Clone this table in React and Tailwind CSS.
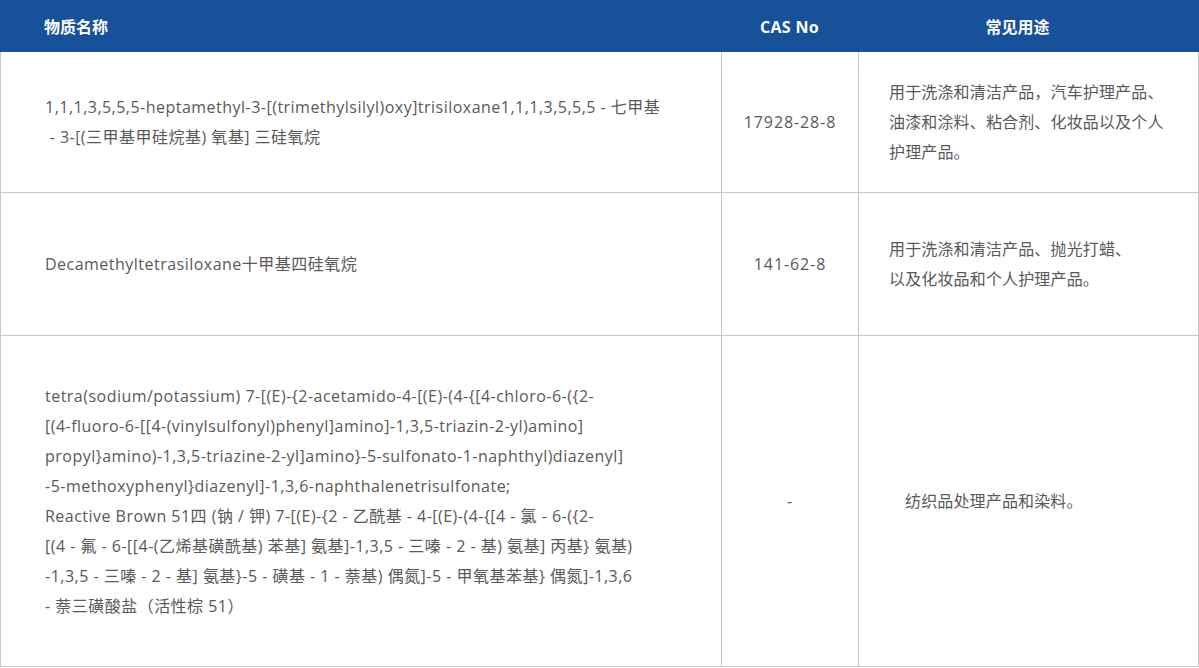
const font = { fontFamily: '"Open Sans", "Noto Sans CJK SC", sans-serif' };

const rows = [
  {
    name: [
      "1,1,1,3,5,5,5-heptamethyl-3-[(trimethylsilyl)oxy]trisiloxane1,1,1,3,5,5,5 - 七甲基",
      " - 3-[(三甲基甲硅烷基) 氧基] 三硅氧烷",
    ],
    cas: "17928-28-8",
    use: ["用于洗涤和清洁产品，汽车护理产品、", "油漆和涂料、粘合剂、化妆品以及个人", "护理产品。"],
    h: "h-[141px]",
    usePad: "pl-[30px]",
  },
  {
    name: ["Decamethyltetrasiloxane十甲基四硅氧烷"],
    cas: "141-62-8",
    use: ["用于洗涤和清洁产品、抛光打蜡、", "以及化妆品和个人护理产品。"],
    h: "h-[143px]",
    usePad: "pl-[30px]",
  },
  {
    name: [
      "tetra(sodium/potassium) 7-[(E)-{2-acetamido-4-[(E)-(4-{[4-chloro-6-({2-",
      "[(4-fluoro-6-[[4-(vinylsulfonyl)phenyl]amino]-1,3,5-triazin-2-yl)amino]",
      "propyl}amino)-1,3,5-triazine-2-yl]amino}-5-sulfonato-1-naphthyl)diazenyl]",
      "-5-methoxyphenyl}diazenyl]-1,3,6-naphthalenetrisulfonate;",
      "Reactive Brown 51四 (钠 / 钾) 7-[(E)-{2 - 乙酰基 - 4-[(E)-(4-{[4 - 氯 - 6-({2-",
      "[(4 - 氟 - 6-[[4-(乙烯基磺酰基) 苯基] 氨基]-1,3,5 - 三嗪 - 2 - 基) 氨基] 丙基} 氨基)",
      "-1,3,5 - 三嗪 - 2 - 基] 氨基}-5 - 磺基 - 1 - 萘基) 偶氮]-5 - 甲氧基苯基} 偶氮]-1,3,6",
      "- 萘三磺酸盐（活性棕 51）",
    ],
    cas: "-",
    use: ["纺织品处理产品和染料。"],
    h: "h-[331px]",
    usePad: "pl-[46px]",
  },
];

export default function App() {
  return (
    <div className="w-[1199px] h-[668px] bg-white text-[16px]" style={font}>
      <div className="grid grid-cols-[721px_137px_341px] h-[52px] bg-[#16519a] text-white font-bold">
        <div className="flex items-center pl-[44px] pt-px">物质名称</div>
        <div className="flex items-center justify-center pt-px tracking-[0.3px]">CAS No</div>
        <div className="flex items-center justify-center pt-px pr-[22px]">常见用途</div>
      </div>

      {rows.map((r, i) => (
        <div
          key={i}
          className={`grid grid-cols-[721px_137px_341px] ${r.h} border-b border-[#c8c8c8] text-[#595959] leading-[30px]`}
        >
          <div className="flex flex-col justify-center pl-[44px] border-l border-[#c8c8c8] tracking-[0.48px]">
            {r.name.map((l, j) => (
              <div key={j} className="whitespace-pre">{l}</div>
            ))}
          </div>
          <div className="flex items-center justify-center border-l border-[#c8c8c8] tracking-[0.9px]">{r.cas}</div>
          <div className={`flex flex-col justify-center ${r.usePad} border-l border-r border-[#c8c8c8] tracking-[0.15px]`}>
            {r.use.map((l, j) => (
              <div key={j} className="whitespace-pre">{l}</div>
            ))}
          </div>
        </div>
      ))}
    </div>
  );
}
